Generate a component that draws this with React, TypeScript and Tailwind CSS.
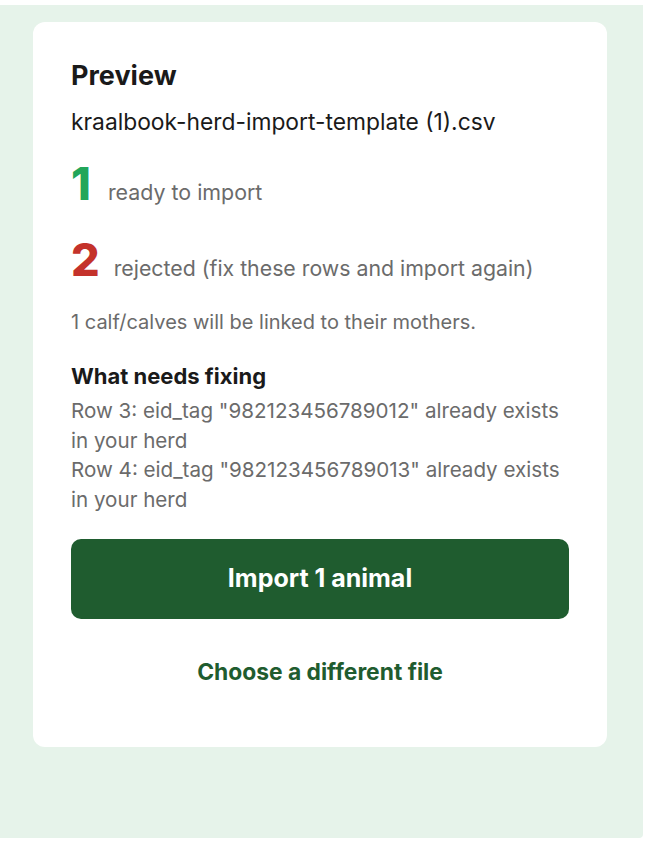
const errors = [
  'Row 3: eid_tag "982123456789012" already exists in your herd',
  'Row 4: eid_tag "982123456789013" already exists in your herd',
];

export default function App() {
  return (
    <div className="min-h-[841px] w-[660px] bg-white pt-[5px] font-['Inter','Liberation_Sans',sans-serif]">
      <div className="h-[833px] w-[643px] rounded-br-[4px] bg-[#e6f3ea] pt-[17px]">
        <div className="ml-[33px] flex h-[725px] w-[574px] flex-col rounded-[12px] bg-white px-[38px] pt-[38px]">
          <h2 className="text-[27px] font-bold leading-[32px] text-[#1a1a1a]">Preview</h2>
          <p className="mt-[15px] text-[22.8px] leading-[30px] text-[#1a1a1a]">
            kraalbook-herd-import-template (1).csv
          </p>

          <div className="mt-[24px] flex items-baseline gap-[17px]">
            <span className="text-[45px] font-extrabold leading-none text-[#22a65a]">1</span>
            <span className="text-[21.4px] leading-none text-[#6b6b6b]">ready to import</span>
          </div>
          <div className="mt-[31px] flex items-baseline gap-[14px]">
            <span className="text-[45px] font-extrabold leading-none text-[#c4322b]">2</span>
            <span className="text-[21.3px] leading-none text-[#6b6b6b]">
              rejected (fix these rows and import again)
            </span>
          </div>

          <p className="mt-[26px] text-[20px] leading-[28px] text-[#6b6b6b]">
            1 calf/calves will be linked to their mothers.
          </p>

          <h3 className="mt-[26px] text-[22px] font-bold leading-[28px] text-[#1a1a1a]">What needs fixing</h3>
          <ul className="mt-[6px] flex flex-col">
            {errors.map((e) => (
              <li key={e} className="text-[20.6px] leading-[29.5px] text-[#6b6b6b]">
                {e}
              </li>
            ))}
          </ul>

          <button
            type="button"
            className="mt-[25px] h-[80px] w-full rounded-[10px] bg-[#1f5c2f] text-[25px] font-bold text-white"
          >
            Import 1 animal
          </button>
          <button type="button" className="mt-[38px] text-[22.8px] font-bold leading-[30px] text-[#1f5c2f]">
            Choose a different file
          </button>
        </div>
      </div>
    </div>
  );
}
